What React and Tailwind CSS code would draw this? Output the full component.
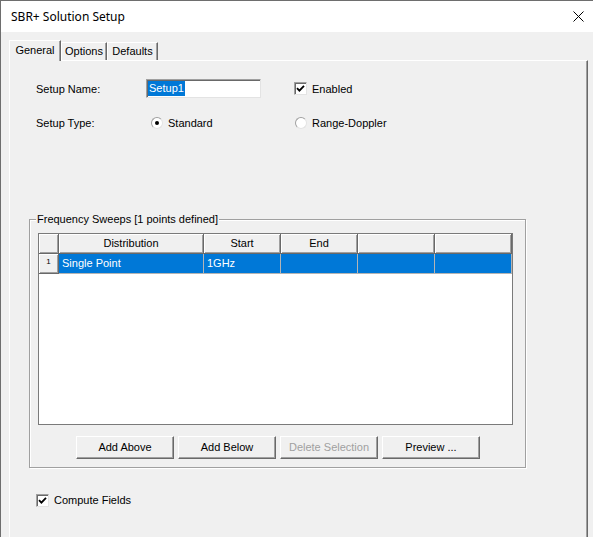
import React from 'react'

// Classic Win32-style check box with a heavy tick
function CheckBox({ checked }) {
  return (
    <div className="w-[13px] h-[13px] shrink-0 bg-white border border-t-[#a0a0a0] border-l-[#a0a0a0] border-r-[#e3e3e3] border-b-[#e3e3e3] shadow-[inset_1px_1px_#696969] flex items-center justify-center">
      {checked && (
        <svg width="9" height="9" viewBox="0 0 9 9">
          <path d="M1 4.2 L3.4 6.6 L8 1.8" fill="none" stroke="#000" strokeWidth="1.8" />
        </svg>
      )}
    </div>
  )
}

function Radio({ checked }) {
  return (
    <div className="w-[12px] h-[12px] shrink-0 rounded-full bg-white border border-t-[#a0a0a0] border-l-[#a0a0a0] border-r-[#e3e3e3] border-b-[#e3e3e3] flex items-center justify-center">
      {checked && <div className="w-[4px] h-[4px] rounded-full bg-black" />}
    </div>
  )
}

function Button({ children, disabled }) {
  return (
    <div
      className={`w-[98px] h-[23px] flex items-center justify-center bg-[#f0f0f0] border border-t-white border-l-white border-r-[#696969] border-b-[#696969] shadow-[inset_-1px_-1px_#a0a0a0] ${
        disabled ? 'text-[#a0a0a0]' : 'text-black'
      }`}
    >
      {children}
    </div>
  )
}

const columns = [
  { label: 'Distribution', w: 'w-[145px]' },
  { label: 'Start', w: 'w-[77px]' },
  { label: 'End', w: 'w-[77px]' },
  { label: '', w: 'w-[77px]' },
  { label: '', w: 'w-[77px]' },
]

const row = ['Single Point', '1GHz', '', '', '']

function HeaderCell({ w, children }) {
  return (
    <div
      className={`${w} h-[20px] shrink-0 flex items-center justify-center bg-[#f0f0f0] border-r border-b border-[#696969] shadow-[inset_1px_1px_#fff,inset_-1px_-1px_#a0a0a0]`}
    >
      {children}
    </div>
  )
}

function SweepGrid() {
  return (
    <div className="ml-[8px] mt-[7px] w-[475px] h-[192px] bg-white border border-[#7a7a7a] flex flex-col">
      <div className="flex">
        <HeaderCell w="w-[20px]" />
        {columns.map((c, i) => (
          <HeaderCell key={i} w={c.w}>
            {c.label}
          </HeaderCell>
        ))}
      </div>
      <div className="flex">
        <div className="w-[20px] h-[20px] shrink-0 flex justify-center pt-[4px] text-[8px] leading-none bg-[#f0f0f0] border-r border-b border-[#696969] shadow-[inset_1px_1px_#fff,inset_-1px_-1px_#a0a0a0]">
          1
        </div>
        {columns.map((c, i) => (
          <div
            key={i}
            className={`${c.w} h-[20px] shrink-0 flex items-center pl-[3px] bg-[#0078d7] text-white border-r border-b border-[#b4b4b4]`}
          >
            {row[i]}
          </div>
        ))}
      </div>
    </div>
  )
}

export default function App() {
  return (
    <div className="w-[593px] h-[537px] overflow-hidden flex flex-col bg-[#f0f0f0] border-l border-t border-[#6e6e6e] text-[11px] leading-[13px] text-black font-['Liberation_Sans',Arial,sans-serif]">
      {/* title bar */}
      <div className="h-[31px] shrink-0 bg-white flex items-center justify-between pl-[10px] pr-[9px]">
        <span className="text-[12px] font-['Noto_Sans','Open_Sans',sans-serif] -mt-[1px]">
          SBR+ Solution Setup
        </span>
        <svg width="11" height="11" viewBox="0 0 11 11">
          <path d="M0.5 0.5 L10.5 10.5 M10.5 0.5 L0.5 10.5" stroke="#000" strokeWidth="1" />
        </svg>
      </div>

      {/* tabs */}
      <div className="mt-[8px] pl-[8px] h-[20px] flex items-end shrink-0 relative z-10">
        <div className="w-[52px] h-[21px] -mb-px flex items-center justify-center pb-[2px] bg-[#f0f0f0] border-l border-t border-white border-r border-r-[#696969] shadow-[inset_-1px_0_#a0a0a0]">
          General
        </div>
        <div className="w-[46px] h-[18px] flex items-center justify-center border-l border-t border-white border-r border-r-[#696969] shadow-[inset_-1px_0_#a0a0a0]">
          Options
        </div>
        <div className="w-[51px] h-[18px] flex items-center justify-center border-l border-t border-white border-r border-r-[#696969] shadow-[inset_-1px_0_#a0a0a0]">
          Defaults
        </div>
      </div>

      {/* General page */}
      <div className="ml-[8px] w-[579px] flex-1 flex flex-col border-l border-t border-white border-r border-r-[#696969] shadow-[inset_-1px_0_#a0a0a0]">
        <div className="mt-[18px] pl-[26px] h-[19px] flex items-center">
          <div className="w-[110px] pt-[1px]">Setup Name:</div>
          <div className="w-[115px] h-[19px] bg-white flex items-center border border-t-[#a0a0a0] border-l-[#a0a0a0] border-r-[#e3e3e3] border-b-[#e3e3e3] shadow-[inset_1px_1px_#696969]">
            <span className="ml-[1px] h-[15px] leading-[15px] px-[1px] bg-[#0078d7] text-white">Setup1</span>
          </div>
          <div className="ml-[33px]">
            <CheckBox checked />
          </div>
          <div className="ml-[5px] pt-[1px]">Enabled</div>
        </div>

        <div className="mt-[15px] pl-[26px] h-[19px] flex items-center">
          <div className="w-[115px] pt-[1px]">Setup Type:</div>
          <div className="w-[144px] flex items-center gap-[5px]">
            <Radio checked />
            <span className="pt-[1px]">Standard</span>
          </div>
          <div className="flex items-center gap-[5px]">
            <Radio />
            <span className="pt-[1px]">Range-Doppler</span>
          </div>
        </div>

        {/* Frequency sweeps group */}
        <div className="mt-[87px] ml-[19px] w-[497px] border border-[#a0a0a0] shadow-[inset_1px_1px_#fff,1px_1px_#fff] pb-[8px]">
          <div className="-mt-[7px] ml-[6px] px-[1px] w-fit bg-[#f0f0f0] leading-[13px]">
            Frequency Sweeps [1 points defined]
          </div>
          <SweepGrid />
          <div className="mt-[11px] ml-[46px] flex gap-[4px]">
            <Button>Add Above</Button>
            <Button>Add Below</Button>
            <Button disabled>Delete Selection</Button>
            <Button>Preview ...</Button>
          </div>
        </div>

        <div className="mt-[26px] pl-[26px] flex items-center">
          <CheckBox checked />
          <span className="ml-[5px]">Compute Fields</span>
        </div>
      </div>
    </div>
  )
}
